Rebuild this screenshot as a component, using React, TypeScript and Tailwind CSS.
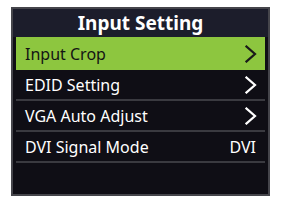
import React from "react";

const Chevron = ({ color }: { color: string }) => (
  <svg width="12" height="18" viewBox="0 0 12 18" fill="none">
    <path d="M1.5 1.5 L10 9 L1.5 16.5" stroke={color} strokeWidth="2.2" strokeLinecap="square" strokeLinejoin="miter" />
  </svg>
);

const Row = ({ label, right, active }: { label: string; right?: string; active?: boolean }) => (
  <div
    className={`flex items-center justify-between pl-[9px] pr-[8px] ${
      active ? "bg-[#8dc63f] text-[#141414] h-[33px]" : "h-[31px] text-white border-b-2 border-[#3a3a40]"
    }`}
  >
    <span className="text-[16px] leading-none">{label}</span>
    {right ? (
      <span className="text-[16px] leading-none pr-[1px]">{right}</span>
    ) : (
      <Chevron color={active ? "#1a1a1a" : "#ffffff"} />
    )}
  </div>
);

export default function App() {
  return (
    <div className="w-[286px] h-[209px] bg-white pt-[7px] pl-[11px]" style={{ fontFamily: '"Noto Sans", "Open Sans", sans-serif' }}>
      <div className="w-[259px] h-[189px] border-2 border-[#45454b] bg-[#0f0e15] flex flex-col">
        <div className="h-[28px] bg-[#1c1d2b] flex items-center justify-center text-white font-bold text-[19px] leading-none pt-[1px]">
          Input Setting
        </div>
        <div className="px-[3px] flex flex-col">
          <Row label="Input Crop" active />
          <Row label="EDID Setting" />
          <Row label="VGA Auto Adjust" />
          <Row label="DVI Signal Mode" right="DVI" />
        </div>
      </div>
    </div>
  );
}
